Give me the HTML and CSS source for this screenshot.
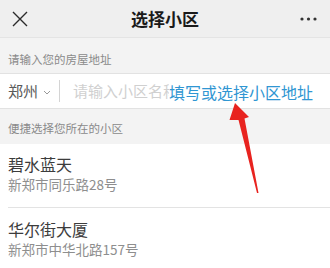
FILE: index.html
```html
<!DOCTYPE html>
<html lang="zh-CN">
<head>
<meta charset="utf-8">
<link rel="stylesheet" href="styles.css">
</head>
<body>
<div class="page">
  <header class="topbar">
    <svg class="close" width="16" height="16" viewBox="0 0 16 16"><path d="M1 1L15 15M15 1L1 15" stroke="#2b2b2b" stroke-width="1.4" fill="none"/></svg>
    <div class="title">选择小区</div>
    <svg class="more" width="18" height="6" viewBox="0 0 18 6"><circle cx="2" cy="3" r="1.6" fill="#333"/><circle cx="8.5" cy="3" r="1.6" fill="#333"/><circle cx="15" cy="3" r="1.6" fill="#333"/></svg>
  </header>
  <div class="section-label label-top">请输入您的房屋地址</div>
  <div class="input-row">
    <span class="city">郑州</span>
    <svg class="chev" width="8" height="5" viewBox="0 0 8 5"><path d="M1 1L4 4L7 1" stroke="#999" stroke-width="1" fill="none"/></svg>
    <span class="sep"></span>
    <span class="placeholder">请输入小区名称</span>
  </div>
  <div class="section-label label-mid">便捷选择您所在的小区</div>
  <ul class="list">
    <li class="item">
      <div class="name">碧水蓝天</div>
      <div class="addr">新郑市同乐路28号</div>
    </li>
    <li class="item">
      <div class="name">华尔街大厦</div>
      <div class="addr">新郑市中华北路157号</div>
    </li>
  </ul>
  <div class="note">填写或选择小区地址</div>
  <svg class="arrow" width="330" height="268" viewBox="0 0 330 268"><path d="M235 103 L249 117 L244.5 118.5 L258.5 193 L257 193 L238.5 120 L229.5 120 Z" fill="#e8231f"/></svg>
</div>
</body>
</html>
```
FILE: styles.css
```css
* { box-sizing: border-box; margin: 0; padding: 0; }
html, body { width: 330px; height: 268px; overflow: hidden; }
body {
  background: #f3f3f3;
  font-family: "Noto Sans CJK SC", "Noto Sans", sans-serif;
}
.page { position: relative; width: 330px; height: 268px; }
.topbar {
  height: 38px;
  background: #efefef;
  border-bottom: 1px solid #e4e4e4;
  display: flex;
  align-items: center;
  justify-content: space-between;
  padding: 0 12px 0 12px;
}
.close { display: block; margin-top: 1px; }
.more { display: block; }
.title {
  font-size: 17px;
  font-weight: 700;
  color: #1a1a1a;
  line-height: 20px;
  position: relative;
  left: 1px;
}
.section-label {
  font-size: 11.5px;
  color: #8a8a8a;
  line-height: 14px;
  padding: 0 8px;
  display: flex;
  align-items: flex-end;
}
.label-top { height: 35px; padding-bottom: 7px; }
.label-mid { height: 35px; padding-bottom: 9px; }
.input-row {
  height: 36px;
  background: #fff;
  border-top: 1px solid #e2e2e2;
  border-bottom: 1px solid #e2e2e2;
  display: flex;
  align-items: center;
  padding: 0 8px;
}
.city { font-size: 15px; color: #5a5a5a; line-height: 20px; }
.chev { margin-left: 5px; margin-top: 2px; display: block; }
.sep { width: 1px; height: 22px; background: #d4d4d4; margin-left: 8px; }
.placeholder { font-size: 15px; color: #d0d0d0; line-height: 20px; margin-left: 13px; }
.list { list-style: none; background: #fff; }
.item { padding: 10px 8px 13px 8px; }
.item + .item { border-top: 1px solid #e3e3e3; margin-left: 8px; padding-left: 0; padding-top: 11px; }
.name { font-size: 16px; color: #3c3c3c; line-height: 20px; }
.addr { font-size: 13.5px; color: #8e8e8e; line-height: 20px; }
.note {
  position: absolute;
  left: 169px;
  top: 82px;
  font-size: 16px;
  line-height: 20px;
  color: #3096d2;
  background: #fff;
  padding-right: 2px;
}
.arrow { position: absolute; left: 0; top: 0; }
```
